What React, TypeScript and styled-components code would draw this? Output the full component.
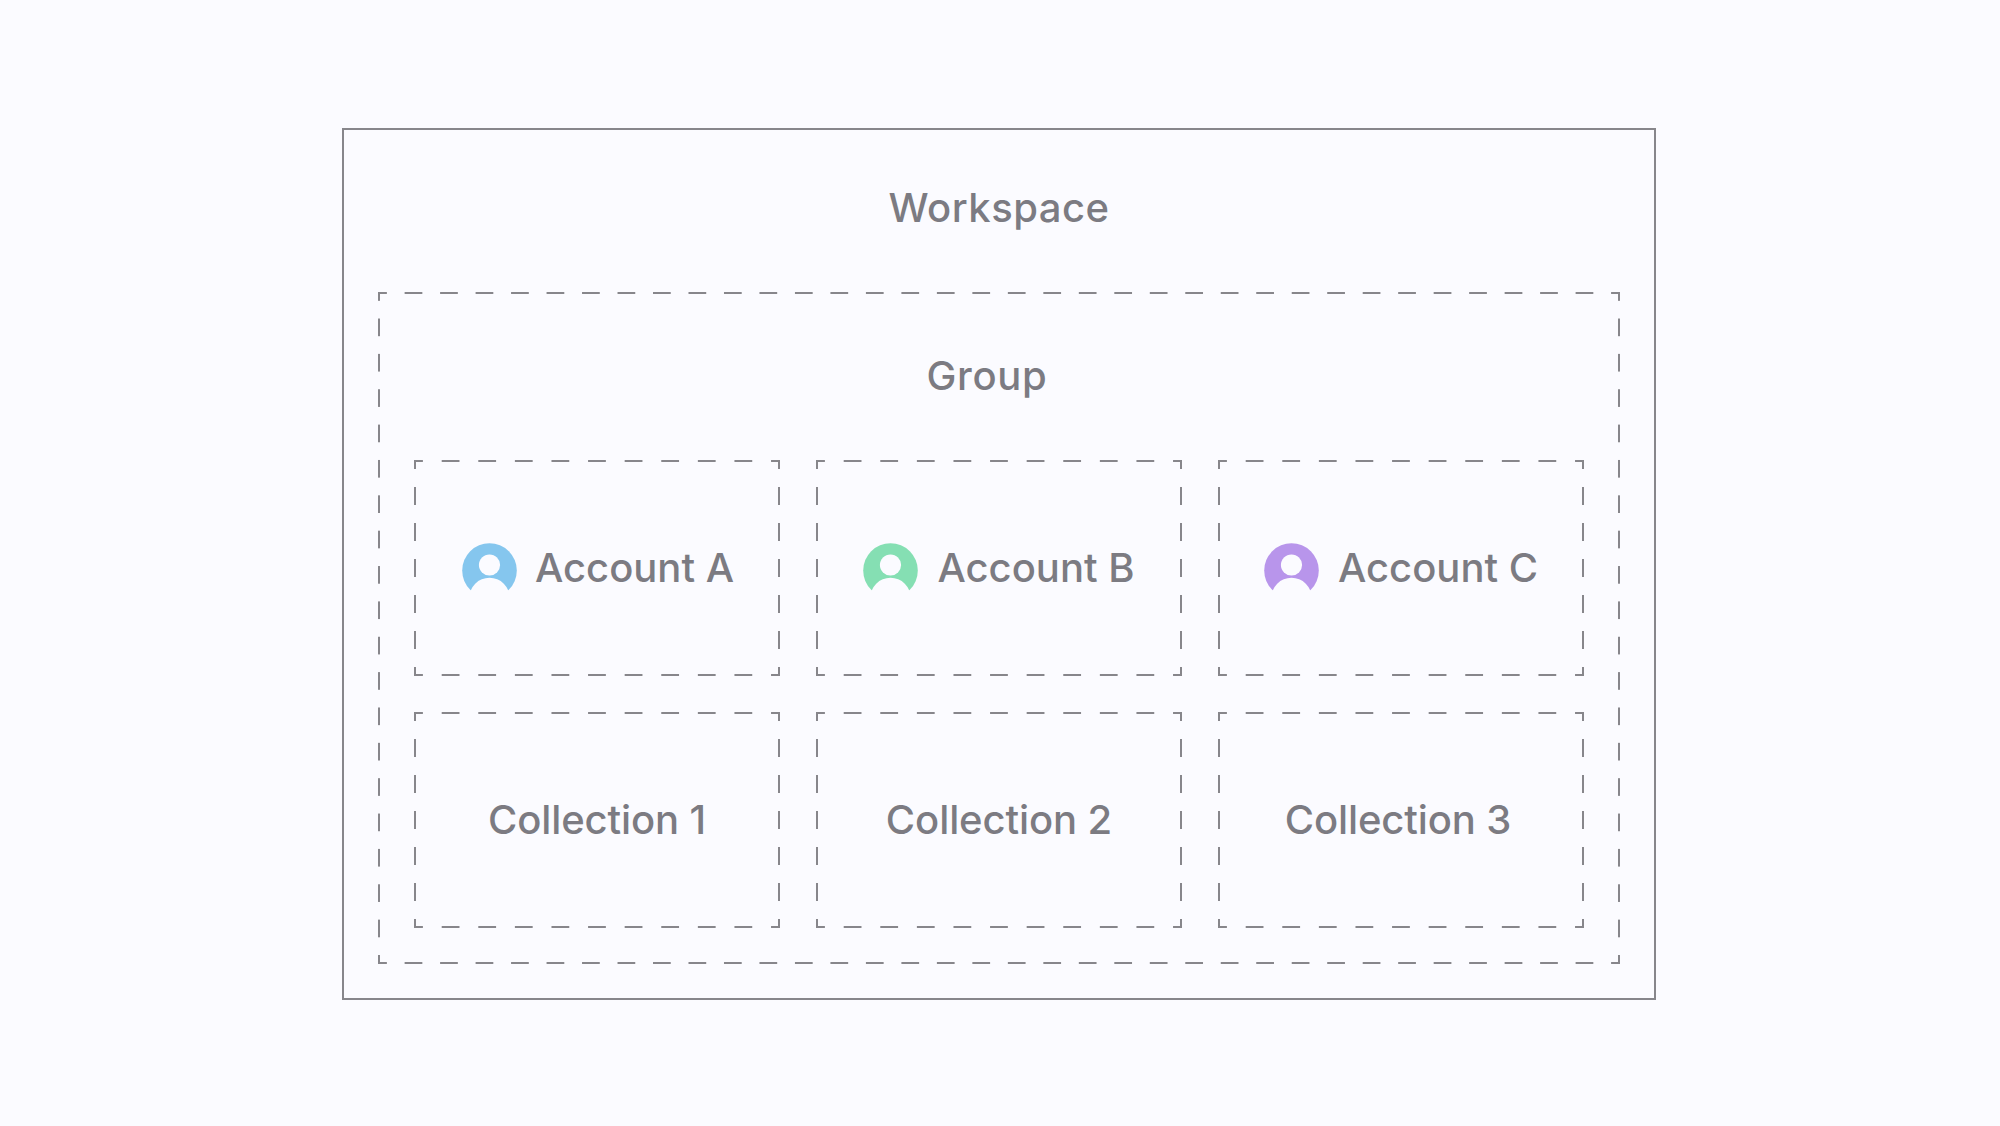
import styled, { createGlobalStyle } from "styled-components";

const GlobalStyle = createGlobalStyle`
    html, body {
        margin: 0;
        padding: 0;
        background: #fbfbff;
    }

    body {
        font-family: "Inter", "Liberation Sans", sans-serif;
    }
`;

const line = "#87868b";

const accounts = [
    {name: "Account A", color: "#85c6ee", shift: -2},
    {name: "Account B", color: "#85dfb3", shift: 0},
    {name: "Account C", color: "#b895eb", shift: 0},
];

const collections = [
    {name: "Collection 1", shift: 0},
    {name: "Collection 2", shift: 0},
    {name: "Collection 3", shift: 6},
];

const AccountIcon = ({color}: { color: string }) => (
    <IconSvg viewBox="0 0 55 55">
        <circle cx="27.5" cy="27.5" r="27.3" fill={color}/>
        <circle cx="27.5" cy="22" r="10.6" fill="#fbfbff"/>
        <circle cx="27.5" cy="55" r="20.2" fill="#fbfbff"/>
    </IconSvg>
);

export default function App() {
    return (
        <>
            <GlobalStyle/>
            <Page>
                <Workspace>
                    <WorkspaceTitle $tracking={0.5}>Workspace</WorkspaceTitle>
                    <Group>
                        <GroupTitle $tracking={0.7}>Group</GroupTitle>
                        <Grid>
                            {accounts.map((account) => (
                                <Cell key={account.name} $shift={account.shift}>
                                    <AccountIcon color={account.color}/>
                                    <Label>{account.name}</Label>
                                </Cell>
                            ))}
                            {collections.map((collection) => (
                                <Cell key={collection.name} $shift={collection.shift}>
                                    <Label $tracking={-0.1}>{collection.name}</Label>
                                </Cell>
                            ))}
                        </Grid>
                    </Group>
                </Workspace>
            </Page>
        </>
    );
}

const Page = styled.div`
    width: 2000px;
    height: 1126px;
    padding: 128px 0 0 342px;
    box-sizing: border-box;
    overflow: hidden;
`;

const Workspace = styled.section`
    width: 1314px;
    height: 872px;
    box-sizing: border-box;
    border: 2px solid ${line};
    padding: 0 34px;
`;

const Label = styled.span<{ $tracking?: number }>`
    color: #7c7b82;
    font-size: 40px;
    font-weight: 500;
    letter-spacing: ${({$tracking = 0}) => $tracking}px;
    line-height: 48px;
    white-space: nowrap;
`;

const WorkspaceTitle = styled(Label)`
    display: block;
    height: 162px;
    line-height: 156px;
    text-align: center;
`;

const dashed = `
    background-image:
        linear-gradient(to right, ${line} 25%, transparent 25% 75%, ${line} 75%),
        linear-gradient(to right, ${line} 25%, transparent 25% 75%, ${line} 75%),
        linear-gradient(to bottom, ${line} 25%, transparent 25% 75%, ${line} 75%),
        linear-gradient(to bottom, ${line} 25%, transparent 25% 75%, ${line} 75%);
    background-size: 35.5px 2px, 35.5px 2px, 2px 35.5px, 2px 35.5px;
    background-position: left top, left bottom, left top, right top;
    background-repeat: round no-repeat, round no-repeat, no-repeat round, no-repeat round;
`;

const Group = styled.div`
    ${dashed};
    height: 672px;
    box-sizing: border-box;
    padding: 0 36px;
`;

const GroupTitle = styled(Label)`
    display: block;
    height: 168px;
    line-height: 168px;
    text-align: center;
    padding-right: 24px;
    box-sizing: border-box;
`;

const Grid = styled.div`
    display: grid;
    grid-template-columns: repeat(3, 366px);
    grid-auto-rows: 216px;
    gap: 36px;
`;

const Cell = styled.div<{ $shift?: number }>`
    ${dashed};
    display: flex;
    align-items: center;
    justify-content: center;
    gap: ${({$shift = 0}) => ($shift < 0 ? 18 : 19)}px;
    padding-right: ${({$shift = 0}) => Math.max($shift, 0)}px;
    padding-left: ${({$shift = 0}) => Math.max(-$shift, 0)}px;
    box-sizing: border-box;
`;

const IconSvg = styled.svg`
    width: 55px;
    height: 55px;
    flex: none;
    margin-top: 5px;
`;
